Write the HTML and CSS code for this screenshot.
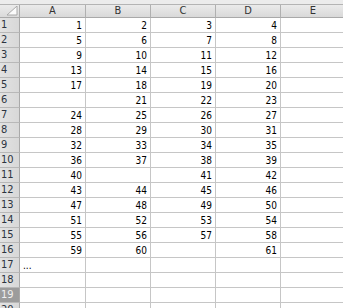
FILE: index.html
```html
<!DOCTYPE html>
<html>
<head>
<meta charset="utf-8">
<link rel="stylesheet" href="styles.css">
</head>
<body>
<div class="topstrip"></div>
<div class="sheet" id="sheet">
  <div class="corner"><svg class="tri" width="12" height="10" viewBox="0 0 12 10"><polygon points="11,0 11,9 1,9" fill="#fbfbfb" stroke="#a8a8a8" stroke-width="1"/></svg></div>
  <div class="colhead">A</div><div class="colhead">B</div><div class="colhead">C</div><div class="colhead">D</div><div class="colhead">E</div>

  <div class="rowhead">1</div><div class="cell">1</div><div class="cell">2</div><div class="cell">3</div><div class="cell">4</div><div class="cell"></div>
  <div class="rowhead">2</div><div class="cell">5</div><div class="cell">6</div><div class="cell">7</div><div class="cell">8</div><div class="cell"></div>
  <div class="rowhead">3</div><div class="cell">9</div><div class="cell">10</div><div class="cell">11</div><div class="cell">12</div><div class="cell"></div>
  <div class="rowhead">4</div><div class="cell">13</div><div class="cell">14</div><div class="cell">15</div><div class="cell">16</div><div class="cell"></div>
  <div class="rowhead">5</div><div class="cell">17</div><div class="cell">18</div><div class="cell">19</div><div class="cell">20</div><div class="cell"></div>
  <div class="rowhead">6</div><div class="cell"></div><div class="cell">21</div><div class="cell">22</div><div class="cell">23</div><div class="cell"></div>
  <div class="rowhead">7</div><div class="cell">24</div><div class="cell">25</div><div class="cell">26</div><div class="cell">27</div><div class="cell"></div>
  <div class="rowhead">8</div><div class="cell">28</div><div class="cell">29</div><div class="cell">30</div><div class="cell">31</div><div class="cell"></div>
  <div class="rowhead">9</div><div class="cell">32</div><div class="cell">33</div><div class="cell">34</div><div class="cell">35</div><div class="cell"></div>
  <div class="rowhead">10</div><div class="cell">36</div><div class="cell">37</div><div class="cell">38</div><div class="cell">39</div><div class="cell"></div>
  <div class="rowhead">11</div><div class="cell">40</div><div class="cell"></div><div class="cell">41</div><div class="cell">42</div><div class="cell"></div>
  <div class="rowhead">12</div><div class="cell">43</div><div class="cell">44</div><div class="cell">45</div><div class="cell">46</div><div class="cell"></div>
  <div class="rowhead">13</div><div class="cell">47</div><div class="cell">48</div><div class="cell">49</div><div class="cell">50</div><div class="cell"></div>
  <div class="rowhead">14</div><div class="cell">51</div><div class="cell">52</div><div class="cell">53</div><div class="cell">54</div><div class="cell"></div>
  <div class="rowhead">15</div><div class="cell">55</div><div class="cell">56</div><div class="cell">57</div><div class="cell">58</div><div class="cell"></div>
  <div class="rowhead">16</div><div class="cell">59</div><div class="cell">60</div><div class="cell"></div><div class="cell">61</div><div class="cell"></div>
  <div class="rowhead">17</div><div class="cell text">...</div><div class="cell"></div><div class="cell"></div><div class="cell"></div><div class="cell"></div>
  <div class="rowhead">18</div><div class="cell"></div><div class="cell"></div><div class="cell"></div><div class="cell"></div><div class="cell"></div>
  <div class="rowhead sel">19</div><div class="cell"></div><div class="cell"></div><div class="cell"></div><div class="cell"></div><div class="cell"></div>
  <div class="rowhead">20</div><div class="cell"></div><div class="cell"></div><div class="cell"></div><div class="cell"></div><div class="cell"></div>
</div>
</body>
</html>
```
FILE: styles.css
```css
html, body {
  margin: 0;
  padding: 0;
  background: #ffffff;
  overflow: hidden;
}
body {
  width: 343px;
  height: 308px;
  font-family: "DejaVu Sans Condensed", "DejaVu Sans", sans-serif;
  font-stretch: condensed;
}
.topstrip {
  height: 5px;
  box-sizing: border-box;
  background: #ececec;
  border-bottom: 1px solid #b4b4b4;
}
.sheet {
  display: grid;
  grid-template-columns: 20px 66px 65px 65px 65px 65px;
  grid-template-rows: 13px repeat(20, 15px);
}
.corner, .colhead, .rowhead, .cell {
  box-sizing: border-box;
  border-right: 1px solid #c6c6c6;
  border-bottom: 1px solid #c6c6c6;
  overflow: hidden;
  white-space: nowrap;
}
.corner {
  background: linear-gradient(#ebebeb, #dadada);
  border-right-color: #a9a9a9;
  border-bottom-color: #a9a9a9;
  position: relative;
}
.tri {
  position: absolute;
  right: 1px;
  bottom: 1px;
}
.colhead {
  background: linear-gradient(#ebebeb, #d9d9d9);
  border-right-color: #b0b0b0;
  border-bottom-color: #a9a9a9;
  color: #333333;
  font-size: 11px;
  line-height: 12px;
  text-align: center;
}
.rowhead {
  background: linear-gradient(90deg, #e2e2e2, #d8d8d8);
  border-right-color: #a9a9a9;
  border-bottom-color: #b8b8b8;
  color: #2c3440;
  font-size: 11px;
  line-height: 14px;
  padding-left: 1px;
}
.rowhead.sel {
  background: #9c9c9c;
  color: #f0f0f0;
}
.cell {
  color: #000000;
  font-size: 10px;
  line-height: 15px;
  text-align: right;
  padding-right: 3px;
}
.cell.text {
  text-align: left;
  padding-left: 3px;
}
```
